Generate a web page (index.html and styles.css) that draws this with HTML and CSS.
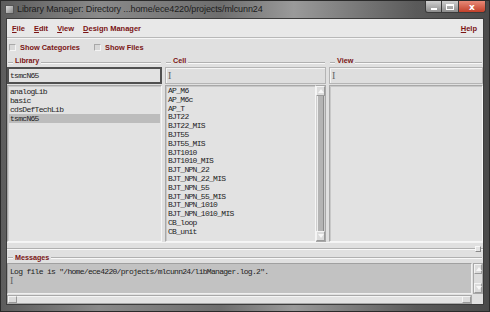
FILE: index.html
```html
<!DOCTYPE html>
<html>
<head>
<meta charset="utf-8">
<link rel="stylesheet" href="styles.css">
</head>
<body>
<div class="window">
  <div class="titlebar">
    <div class="appicon"></div>
    <div class="title">Library Manager: Directory ...home/ece4220/projects/mlcunn24</div>
    <div class="caps">
      <div class="cap min"><span></span></div>
      <div class="cap max"><span></span></div>
      <div class="cap close">x</div>
    </div>
  </div>
  <div class="client">
    <div class="menubar">
      <span class="mi"><u>F</u>ile</span>
      <span class="mi"><u>E</u>dit</span>
      <span class="mi"><u>V</u>iew</span>
      <span class="mi"><u>D</u>esign Manager</span>
      <span class="mi help"><u>H</u>elp</span>
    </div>
    <div class="options">
      <span class="chk"><span class="box"></span>Show Categories</span>
      <span class="chk"><span class="box"></span>Show Files</span>
    </div>
    <div class="panes">
      <div class="pane lib">
        <div class="glabel"><span>Library</span></div>
        <div class="input focus">tsmcN65</div>
        <div class="list">
          <div class="row">analogLib</div>
          <div class="row">basic</div>
          <div class="row">cdsDefTechLib</div>
          <div class="row sel">tsmcN65</div>
        </div>
      </div>
      <div class="pane cell">
        <div class="glabel"><span>Cell</span></div>
        <div class="input"><span class="caret">I</span></div>
        <div class="listwrap">
          <div class="list">
            <div class="row">AP_M6</div>
            <div class="row">AP_M6c</div>
            <div class="row">AP_T</div>
            <div class="row">BJT22</div>
            <div class="row">BJT22_MIS</div>
            <div class="row">BJT55</div>
            <div class="row">BJT55_MIS</div>
            <div class="row">BJT1010</div>
            <div class="row">BJT1010_MIS</div>
            <div class="row">BJT_NPN_22</div>
            <div class="row">BJT_NPN_22_MIS</div>
            <div class="row">BJT_NPN_55</div>
            <div class="row">BJT_NPN_55_MIS</div>
            <div class="row">BJT_NPN_1010</div>
            <div class="row">BJT_NPN_1010_MIS</div>
            <div class="row">CB_loop</div>
            <div class="row">CB_unit</div>
          </div>
          <div class="vscroll">
            <div class="arrow up"></div>
            <div class="track"><div class="thumb"></div></div>
            <div class="arrow down"></div>
          </div>
        </div>
      </div>
      <div class="pane view">
        <div class="glabel"><span>View</span></div>
        <div class="input"><span class="caret">I</span></div>
        <div class="list"></div>
      </div>
    </div>
    <div class="sash"><span class="grip"></span></div>
    <div class="messages">
      <div class="glabel"><span>Messages</span></div>
      <div class="msgbox">
        <div class="msgtext">Log file is "/home/ece4220/projects/mlcunn24/libManager.log.2".<br><span class="caret">I</span></div>
        <div class="vscroll small">
          <div class="arrow up"></div>
          <div class="track"></div>
          <div class="arrow down"></div>
        </div>
      </div>
      <div class="hscroll">
        <div class="harrow left"></div>
        <div class="htrack"></div>
        <div class="harrow right"></div>
      </div>
    </div>
  </div>
</div>
</body>
</html>
```

FILE: styles.css
```css
* { box-sizing: border-box; }
html, body { margin: 0; padding: 0; }
body { width: 490px; height: 312px; overflow: hidden; background: #444; }

.window {
  width: 490px; height: 312px;
  background: linear-gradient(90deg, #5c5c5c 0%, #8a8a8a 20%, #6e6e6e 45%, #9a9a9a 60%, #5a5a5a 85%, #4a4a4a 100%);
  display: flex; flex-direction: column;
  border: 1px solid #2a2a2a;
}

.titlebar {
  height: 16px; flex: none;
  display: flex; align-items: flex-start;
  font-family: "Liberation Sans", Arial, sans-serif; font-size: 9px; color: #1a1a1a;
}
.appicon {
  width: 9px; height: 9px; margin: 4px 3px 0 4px;
  background: linear-gradient(135deg, #ddd, #888);
  border: 1px solid #555;
}
.title { margin-top: 3px; letter-spacing: -0.1px; color: #1c1c1c; }
.caps { margin-left: auto; margin-right: 3px; display: flex; }
.cap {
  height: 12px; border: 1px solid #3a3a3a; border-top: none;
  display: flex; align-items: center; justify-content: center;
  background: linear-gradient(#cfcfcf, #8c8c8c);
}
.cap.min { width: 17px; border-radius: 0 0 0 3px; }
.cap.min span { width: 6px; height: 2px; background: #fff; margin-top: 4px; }
.cap.max { width: 17px; border-left: none; }
.cap.max span { width: 8px; height: 6px; border: 1px solid #fff; border-top-width: 2px; }
.cap.close {
  width: 27px; border-left: none; border-radius: 0 0 3px 0;
  background: linear-gradient(#e88a78, #c2402a);
  color: #fff; font-family: "DejaVu Sans", sans-serif; font-weight: bold; font-size: 9px;
}

.client {
  flex: 1; margin: 1px 5px 6px 5px;
  background: #e0e0e0;
  border: 1px solid #3c3c3c;
  display: flex; flex-direction: column;
  font-family: "Liberation Sans", Arial, sans-serif;
  overflow: hidden;
}

.menubar {
  height: 19px; flex: none;
  display: flex; align-items: center; padding: 0 6px 0 5px; gap: 9px;
  background: #e8e8e8;
  border-bottom: 1px solid #b8b8b8;
  font-size: 7.5px; font-weight: bold; color: #7a1414;
}
.mi u { text-decoration-thickness: 1px; text-underline-offset: 1px; }
.mi.help { margin-left: auto; }

.options {
  height: 18px; flex: none;
  display: flex; align-items: center; padding-left: 2px; gap: 14px;
  border-top: 1px solid #f6f6f6;
  font-size: 7.4px; font-weight: bold; color: #7a1414;
}
.chk { display: flex; align-items: center; }
.box {
  width: 7px; height: 7px; margin-right: 4px;
  background: #d8d8d8; border: 1px solid #a8a8a8; border-right-color: #f4f4f4; border-bottom-color: #f4f4f4;
}

.panes {
  height: 186px; flex: none;
  display: grid; grid-template-columns: 155px 161px 1fr; column-gap: 3px;
}
.pane { display: flex; flex-direction: column; min-width: 0; }
.glabel {
  height: 11px; flex: none; position: relative;
  font-size: 7.2px; font-weight: bold; color: #7a1414;
}
.glabel::before {
  content: ""; position: absolute; left: 1px; right: 1px; top: 6px;
  border-top: 1px solid #b0b0b0; border-bottom: 1px solid #f8f8f8;
}
.glabel span { position: relative; background: #e0e0e0; padding: 0 2px; margin-left: 6px; line-height: 9px; }

.input {
  height: 17px; flex: none;
  background: #dedede;
  border: 1px solid #b4b4b4; box-shadow: inset 1px 1px 0 #f4f4f4;
  font-family: "Liberation Mono", "DejaVu Sans Mono", monospace; font-size: 8px; color: #222;
  letter-spacing: -0.7px;
  padding: 3px 3px 0 2px;
}
.input.focus { border: 2px solid #505050; box-shadow: none; padding: 2px 2px 0 1px; background: #e2e2e2; }
.caret { font-family: "Liberation Serif", serif; font-size: 10px; color: #666; line-height: 9px; letter-spacing: 0; }

.list {
  flex: 1; margin-top: 1px;
  background: #e2e2e2;
  border: 1px solid #a8a8a8; border-right-color: #f6f6f6; border-bottom-color: #f6f6f6;
  box-shadow: inset 1px 1px 0 #c8c8c8;
  padding: 1px 1px 0 1px;
  font-family: "Liberation Mono", "Courier New", monospace; font-size: 8px; color: #1e1e1e;
}
.row { height: 8.8px; line-height: 8.8px; white-space: nowrap; padding-left: 1px; letter-spacing: -0.7px; }
.lib .row { height: 9px; line-height: 9px; }
.row.sel { background: #bcbcbc; }

.listwrap { flex: 1; display: flex; margin-top: 1px; min-height: 0; }
.listwrap .list { margin-top: 0; }
.vscroll {
  width: 10px; flex: none; display: flex; flex-direction: column;
  background: #d6d6d6;
  border: 1px solid #a8a8a8; border-left: none;
}
.arrow { height: 10px; flex: none; background: #dcdcdc; border: 1px solid #f4f4f4; border-right-color: #9a9a9a; border-bottom-color: #9a9a9a; position: relative; }
.arrow::after {
  content: ""; position: absolute; left: 1px; top: 2px;
  border-left: 3px solid transparent; border-right: 3px solid transparent;
}
.arrow.up::after { border-bottom: 4px solid #f8f8f8; }
.arrow.down::after { border-top: 4px solid #f8f8f8; }
.track { flex: 1; background: #cfcfcf; padding: 0 1px; }
.thumb { height: 100%; background: #b4b4b4; border-left: 1px solid #ececec; border-right: 1px solid #8c8c8c; }

.sash {
  height: 11px; flex: none; position: relative;
  border-top: 1px solid #f4f4f4;
}
.sash::after {
  content: ""; position: absolute; left: 0; right: 0; top: 5px;
  border-top: 1px solid #b0b0b0; border-bottom: 1px solid #f8f8f8;
}
.grip { position: absolute; right: 2px; top: 3px; width: 6px; height: 6px; background: #e4e4e4; border: 1px solid #f8f8f8; border-right-color: #888; border-bottom-color: #888; z-index: 1; }

.messages { flex: none; display: flex; flex-direction: column; }
.messages .glabel { height: 10px; }
.messages .glabel::before { top: 4px; }
.messages .glabel span { line-height: 8px; }
.msgbox { height: 31px; flex: none; display: flex; }
.msgtext {
  flex: 1; background: #c2c2c2;
  border: 1px solid #a0a0a0; border-right-color: #f0f0f0; border-bottom-color: #f0f0f0;
  padding: 3px 2px 0 2px;
  font-family: "Liberation Mono", "Courier New", monospace; font-size: 8px; line-height: 9px; color: #1e1e1e;
  white-space: nowrap; overflow: hidden; letter-spacing: -0.7px;
}
.vscroll.small { width: 10px; margin-left: 1px; border: 1px solid #a8a8a8; background: #d8d8d8; }
.vscroll.small .track { background: #dcdcdc; }
.hscroll {
  height: 9px; flex: none; display: flex; margin-right: 11px; margin-top: 1px;
  border: 1px solid #a8a8a8; background: #d8d8d8;
}
.harrow { width: 9px; background: #dcdcdc; border: 1px solid #f4f4f4; border-right-color: #9a9a9a; border-bottom-color: #9a9a9a; }
.htrack { flex: 1; background: #e2e2e2; border-top: 1px solid #f4f4f4; }
```
